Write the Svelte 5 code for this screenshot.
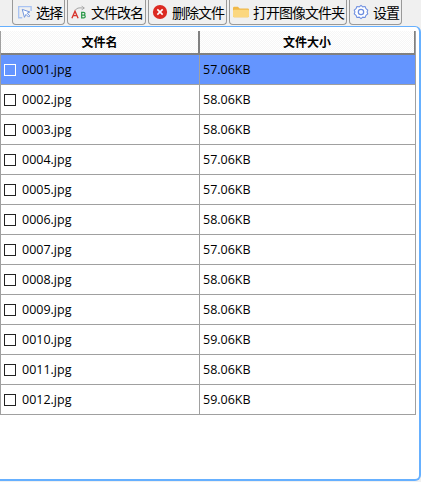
<script>
  const tabs = [
    { label: '选择', icon: 'select' },
    { label: '文件改名', icon: 'rename' },
    { label: '删除文件', icon: 'delete' },
    { label: '打开图像文件夹', icon: 'folder' },
    { label: '设置', icon: 'gear' }
  ];

  const files = [
    ['0001.jpg', '57.06KB'],
    ['0002.jpg', '58.06KB'],
    ['0003.jpg', '58.06KB'],
    ['0004.jpg', '57.06KB'],
    ['0005.jpg', '57.06KB'],
    ['0006.jpg', '58.06KB'],
    ['0007.jpg', '57.06KB'],
    ['0008.jpg', '58.06KB'],
    ['0009.jpg', '58.06KB'],
    ['0010.jpg', '59.06KB'],
    ['0011.jpg', '58.06KB'],
    ['0012.jpg', '59.06KB']
  ];
</script>

<div class="window">
  <div class="tabs">
    {#each tabs as tab}
      <div class="tab">
        <svg class="icon" width="16" height="16" viewBox="0 0 18 18">
          {#if tab.icon === 'select'}
            <path d="M7 15.500H3V3H17V8" fill="none" stroke="#a9c3f2" stroke-width="1.500" />
            <path d="M7 6l2.500 9 1.700-3.300 3 3 1.300-1.300-3-3L15.500 9z" fill="#fff" stroke="#6f93dc" stroke-width="1.100" />
          {:else if tab.icon === 'rename'}
            <path d="M5 7C6 4.500 9 4 13 4.500" fill="none" stroke="#999" stroke-width="1" />
            <path d="M12 2.500l3 2-3 2" fill="none" stroke="#999" stroke-width="1" />
            <path d="M1 16L4.500 8L8 16M2.500 13h4" fill="none" stroke="#d8342c" stroke-width="1.500" />
            <path d="M12 9.500v6h2.500a1.500 1.500 0 0 0 0-3H12h2.200a1.500 1.500 0 0 0 0-3z" fill="none" stroke="#2c9a4a" stroke-width="1.400" />
          {:else if tab.icon === 'delete'}
            <circle cx="9" cy="9" r="8" fill="#dc2a22" />
            <path d="M6 6l6 6M12 6l-6 6" stroke="#fff" stroke-width="1.800" />
          {:else if tab.icon === 'folder'}
            <path d="M0 4.500a1.500 1.500 0 0 1 1.500-1.500h4l2 2h9a1.500 1.500 0 0 1 1.500 1.500v7a1.500 1.500 0 0 1-1.500 1.500h-15a1.500 1.500 0 0 1-1.500-1.500z" fill="#f0b848" />
            <path d="M0 8a1.500 1.500 0 0 1 1.500-1.500h15a1.500 1.500 0 0 1 1.500 1.500v5.500a1.500 1.500 0 0 1-1.500 1.500h-15a1.500 1.500 0 0 1-1.500-1.500z" fill="#fbd77f" />
          {:else}
            <path d="M9 1.500l2 1.700 2.600-.4 1 2.400 2 1.700-.8 2.100.8 2.100-2 1.700-1 2.400-2.600-.4-2 1.700-2-1.700-2.600.4-1-2.400-2-1.700.8-2.100-.8-2.100 2-1.700 1-2.400 2.600.4z" fill="#fff" stroke="#6d8ee0" stroke-width="1.200" />
            <circle cx="9" cy="9" r="3" fill="none" stroke="#6d8ee0" stroke-width="1.400" />
          {/if}
        </svg>
        <span class="label">{tab.label}</span>
      </div>
    {/each}
  </div>

  <div class="panel">
    <div class="table">
      <div class="row head">
        <div class="cell name">文件名</div>
        <div class="cell size">文件大小</div>
      </div>
      {#each files as file, i}
        <div class="row" class:selected={i === 0}>
          <div class="cell name">
            <span class="check"></span>
            <span>{file[0]}</span>
          </div>
          <div class="cell size">{file[1]}</div>
        </div>
      {/each}
    </div>
  </div>
</div>

<style>
  :global(body) {
    margin: 0;
    background: #f0f0f0;
  }

  .window {
    width: 421px;
    height: 482px;
    display: flex;
    flex-direction: column;
    font-family: "Open Sans", "Noto Sans CJK SC", sans-serif;
    color: #000;
    overflow: hidden;
  }

  .tabs {
    height: 26px;
    display: flex;
    gap: 2px;
    padding-left: 12px;
    box-sizing: border-box;
  }

  .tab {
    height: 25px;
    display: flex;
    align-items: center;
    gap: 4px;
    padding: 0 2px 0 3px;
    box-sizing: border-box;
    border: 1px solid #999;
    border-top: none;
    border-radius: 0 0 4px 4px;
    background: #f0f0f0;
    white-space: nowrap;
  }

  .label {
    font-size: 14px;
    letter-spacing: -1px;
  }

  .icon {
    flex: none;
  }

  .panel {
    width: 421px;
    height: 455px;
    box-sizing: border-box;
    padding-top: 4px;
    background: #fff;
    border: 1px solid #66b0ff;
    border-left: none;
    border-right-width: 2px;
    border-bottom-width: 2px;
    border-radius: 0 6px 6px 0;
  }

  .table {
    width: 416px;
    box-sizing: border-box;
    border-left: 1px solid #a0a0a0;
    border-right: 1px solid #a0a0a0;
  }

  .row {
    height: 30px;
    display: grid;
    grid-template-columns: 199px 1fr;
    box-sizing: border-box;
    border-bottom: 1px solid #a0a0a0;
    font-size: 12.5px;
  }

  .row.head {
    height: 24px;
    border-bottom: 2px solid #808080;
    font-size: 12px;
    font-weight: 700;
    background: repeating-conic-gradient(#f6f6f6 0 25%, #fff 0 50%) 0 0 / 2px 2px;
  }

  .row.selected {
    background: #6495ff;
  }

  .cell {
    display: flex;
    align-items: center;
    box-sizing: border-box;
    padding-left: 3px;
  }

  .cell.name {
    gap: 6px;
    border-right: 1px solid #a0a0a0;
  }

  .head .cell {
    justify-content: center;
    padding-left: 0;
  }

  .head .cell.name {
    border-right: 2px solid #808080;
  }

  .head .cell.size {
    border-right: 1px solid #808080;
  }

  .check {
    width: 12px;
    height: 12px;
    box-sizing: border-box;
    border: 1px solid #222;
    background: #fff;
  }

  .selected .check {
    border-color: #fff;
    background: transparent;
  }
</style>
